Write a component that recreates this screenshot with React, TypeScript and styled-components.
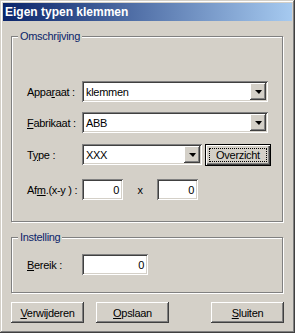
import styled, { createGlobalStyle, css } from "styled-components";

const GlobalStyle = createGlobalStyle`
  body {
    margin: 0;
    font-family: "Liberation Sans", Arial, sans-serif;
    font-size: 11px;
    letter-spacing: -0.3px;
    color: #000;
  }
`;

const raised = css`
  box-shadow: inset -1px -1px #404040, inset 1px 1px #fff,
    inset -2px -2px #808080, inset 2px 2px #d4d0c8;
`;

const sunken = css`
  box-shadow: inset 1px 1px #808080, inset -1px -1px #fff,
    inset 2px 2px #404040, inset -2px -2px #d4d0c8;
`;

const Window = styled.div`
  width: 295px;
  height: 333px;
  box-sizing: border-box;
  padding: 3px;
  background: #d4d0c8;
  box-shadow: inset -1px -1px #404040, inset 1px 1px #d4d0c8,
    inset -2px -2px #808080, inset 2px 2px #fff;
  display: flex;
  flex-direction: column;
`;

const TitleBar = styled.div`
  height: 18px;
  padding-left: 2px;
  display: flex;
  align-items: center;
  background: linear-gradient(to right, #0a246a, #a6caf0);
  color: #fff;
  font-weight: bold;
  font-size: 12px;
  letter-spacing: 0;
`;

const Client = styled.div`
  padding: 15px 8px 0 8px;
  display: flex;
  flex-direction: column;
`;

const GroupBox = styled.div<{ $height: number; $top: number; $pad: number }>`
  position: relative;
  box-sizing: border-box;
  width: 272px;
  height: ${(p) => p.$height}px;
  margin-top: ${(p) => p.$top}px;
  padding: ${(p) => p.$pad}px 0 0 15px;
  border: 1px solid #808080;
  box-shadow: inset 1px 1px #fff, 1px 1px #fff;
  display: flex;
  flex-direction: column;
`;

const Legend = styled.span`
  position: absolute;
  top: -7px;
  left: 6px;
  padding: 0 2px;
  line-height: 13px;
  background: #d4d0c8;
  color: #0a246a;
`;

const Row = styled.div<{ $gap?: number }>`
  display: flex;
  align-items: center;
  height: 21px;
  margin-top: ${(p) => p.$gap ?? 0}px;
`;

const Label = styled.label`
  width: 55px;
  flex: none;
  white-space: nowrap;
`;

const Combo = styled.div<{ $width: number }>`
  ${sunken};
  box-sizing: border-box;
  width: ${(p) => p.$width}px;
  height: 21px;
  padding: 2px;
  background: #fff;
  display: flex;
  align-items: center;
`;

const ComboText = styled.span`
  flex: 1;
  padding-left: 2px;
`;

const DropButton = styled.div`
  ${raised};
  background: #d4d0c8;
  width: 16px;
  height: 17px;
  display: flex;
  align-items: center;
  justify-content: center;
`;

const Arrow = styled.div`
  width: 0;
  height: 0;
  border-left: 4px solid transparent;
  border-right: 3px solid transparent;
  border-top: 4px solid #000;
  margin-top: 1px;
`;

const Field = styled.div<{ $width: number }>`
  ${sunken};
  box-sizing: border-box;
  width: ${(p) => p.$width}px;
  height: 21px;
  padding: 0 4px;
  background: #fff;
  display: flex;
  align-items: center;
  justify-content: flex-end;
`;

const Times = styled.span`
  width: 34px;
  text-align: center;
`;

const Button = styled.div<{ $width: number }>`
  ${raised};
  box-sizing: border-box;
  width: ${(p) => p.$width}px;
  height: 21px;
  background: #d4d0c8;
  display: flex;
  align-items: center;
  justify-content: center;
`;

const DefaultButton = styled.div`
  box-sizing: border-box;
  flex: none;
  width: 66px;
  height: 22px;
  margin-left: 3px;
  padding: 3px;
  border: 1px solid #000;
  background: #d4d0c8;
  box-shadow: inset 1px 1px #fff, inset -1px -1px #404040,
    inset -2px -2px #808080;
  display: flex;
`;

const FocusRect = styled.span`
  flex: 1;
  border: 1px dotted #000;
  display: flex;
  align-items: center;
  justify-content: center;
`;

const ButtonBar = styled.div`
  display: flex;
  gap: 12px;
  margin-top: 9px;

  & > :last-child {
    margin-left: auto;
  }
`;

const Combobox = ({ width, text }: { width: number; text: string }) => (
  <Combo $width={width}>
    <ComboText>{text}</ComboText>
    <DropButton>
      <Arrow />
    </DropButton>
  </Combo>
);

export default function App() {
  return (
    <>
      <GlobalStyle />
      <Window>
        <TitleBar>Eigen typen klemmen</TitleBar>
        <Client>
          <GroupBox $height={186} $top={0} $pad={44}>
            <Legend>Omschrijving</Legend>
            <Row>
              <Label>
                Appa<u>r</u>aat :
              </Label>
              <Combobox width={186} text="klemmen" />
            </Row>
            <Row $gap={10}>
              <Label>
                <u>F</u>abrikaat :
              </Label>
              <Combobox width={186} text="ABB" />
            </Row>
            <Row $gap={11}>
              <Label>
                T<u>y</u>pe :
              </Label>
              <Combobox width={120} text="XXX" />
              <DefaultButton>
                <FocusRect>Overzicht</FocusRect>
              </DefaultButton>
            </Row>
            <Row $gap={14}>
              <Label>
                Af<u>m</u>.(x-y ) :
              </Label>
              <Field $width={41}>0</Field>
              <Times>x</Times>
              <Field $width={41}>0</Field>
            </Row>
          </GroupBox>

          <GroupBox $height={56} $top={15} $pad={16}>
            <Legend>Instelling</Legend>
            <Row>
              <Label>
                <u>B</u>ereik :
              </Label>
              <Field $width={66}>0</Field>
            </Row>
          </GroupBox>

          <ButtonBar>
            <Button $width={73}>
              <span>
                <u>V</u>erwijderen
              </span>
            </Button>
            <Button $width={73}>
              <span>
                <u>O</u>pslaan
              </span>
            </Button>
            <Button $width={73}>
              <span>
                <u>S</u>luiten
              </span>
            </Button>
          </ButtonBar>
        </Client>
      </Window>
    </>
  );
}
